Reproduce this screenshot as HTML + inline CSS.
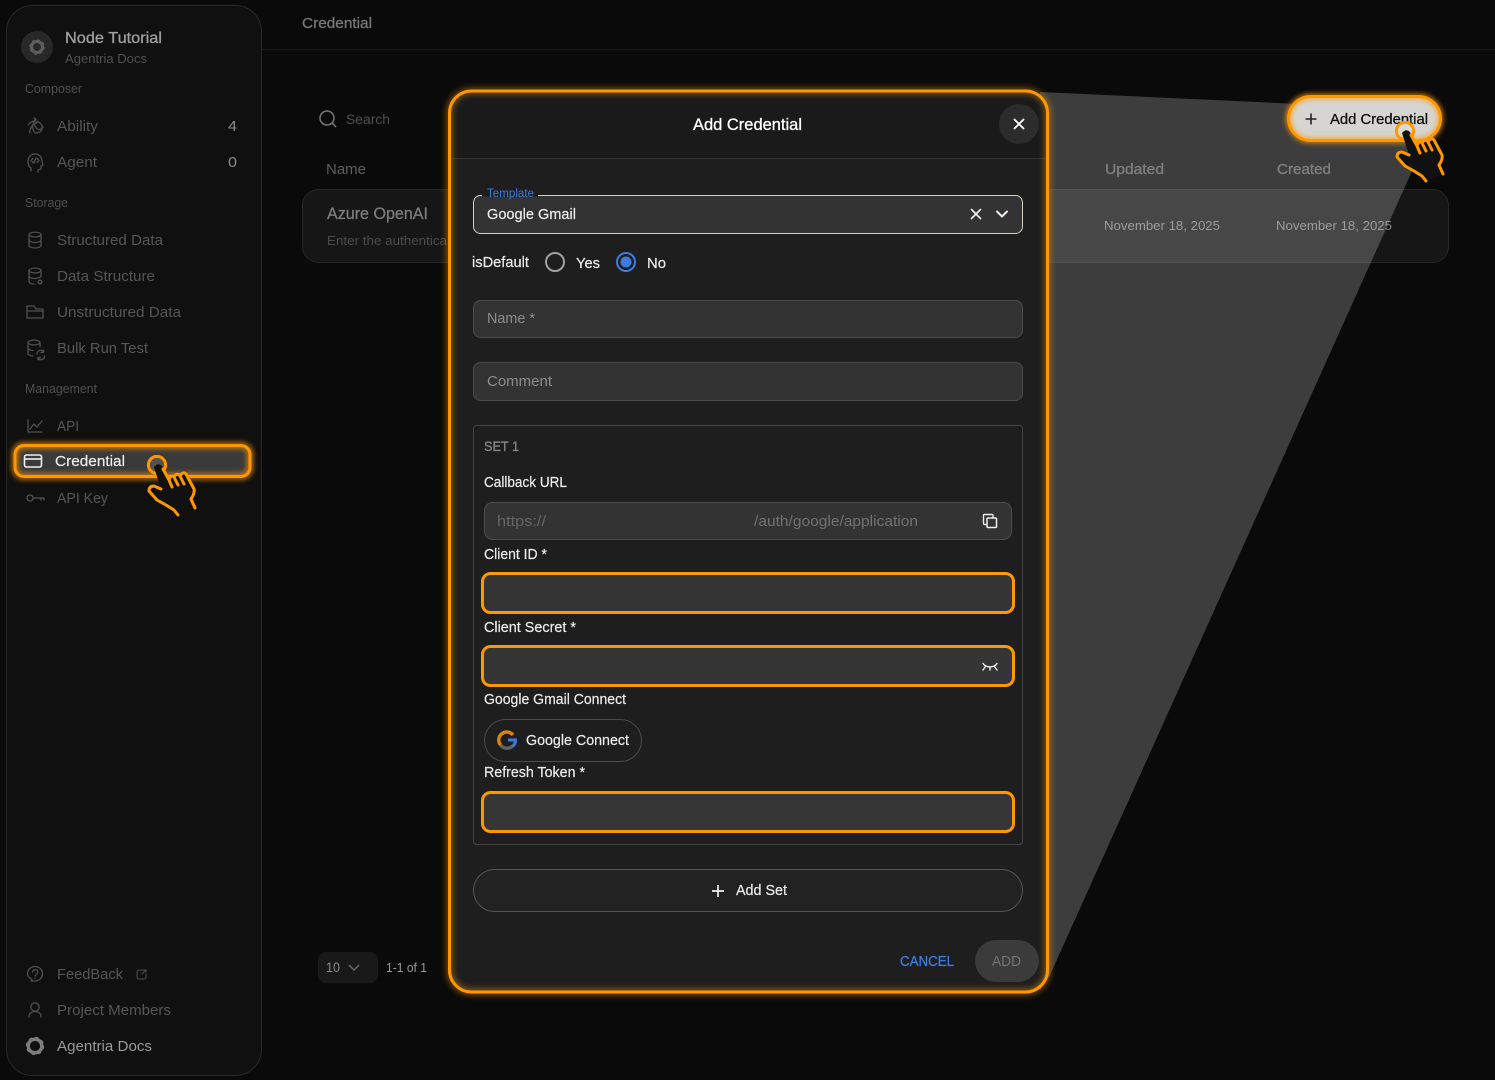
<!DOCTYPE html>
<html lang="en">
<head>
<meta charset="utf-8">
<title>Add Credential</title>
<style>
html,body{margin:0;padding:0;background:#0a0a0a;width:1495px;height:1080px;overflow:hidden}
svg{display:block}
text{font-family:"Liberation Sans",sans-serif;font-size:14.5px;fill:#eee}
.nav{fill:#565656;font-size:15px}
.sec{fill:#505050;font-size:12.5px}
.lab{fill:#ececec;color:#ececec;font-size:14.5px;stroke:currentColor;stroke-width:.2}
.m{stroke:currentColor;stroke-width:.3}
.ic{fill:none;stroke:#505050;stroke-width:1.3;stroke-linecap:round;stroke-linejoin:round}
</style>
</head>
<body>
<svg width="1495" height="1080" viewBox="0 0 1495 1080" xmlns="http://www.w3.org/2000/svg">
<defs>
<filter id="b3" x="-10%" y="-30%" width="120%" height="160%"><feGaussianBlur stdDeviation="3"/></filter>
<filter id="b2" x="-10%" y="-40%" width="120%" height="180%"><feGaussianBlur stdDeviation="2"/></filter>
<g id="hand">
<circle cx="0" cy="0" r="8.600" fill="#fff" fill-opacity=".12" stroke="#ff9800" stroke-width="3"/>
<path d="M-3 2 L4 24 L-3 21 Q-8 21 -8 26 L0 35 L9 40 L17 45 L21 50 L38 43 L34 34 Q38 28 37 24 L29 9 Q26 6 23 11 Q20 7 17 12 Q14 9 12 15 L5 1 Q1 -3 -3 2Z" fill="#111"/>
<path d="M4 24 L-3 21 Q-8 21 -8 26 L0 35 L9 40 L17 45 L21 50 M38 43 L34 34 Q38 28 37 24 L29 9 Q26 6 23 11 Q20 7 17 12 Q14 9 12 15 L6 4 M12 15 L15 22 M17 12 L21 20 M23 11 L27 19" fill="none" stroke="#ff9800" stroke-width="3" stroke-linecap="round" stroke-linejoin="round"/>
</g>
<g id="db"><ellipse cx="0" cy="-5.500" rx="6" ry="2.400"/><path d="M-6 -5.500V5.500C-6 7 -3 8 0 8C3 8 6 7 6 5.500V-5.500M-6 0C-6 1.500 -3 2.500 0 2.500C3 2.500 6 1.500 6 0"/></g>
</defs>

<rect width="1495" height="1080" fill="#0a0a0a"/>

<!-- top bar -->
<path d="M262 49.500H1495" stroke="#1b1b1b"/>
<text x="302" y="28" textLength="70" lengthAdjust="spacingAndGlyphs" class="m" style="fill:#787878;color:#787878;font-size:15px">Credential</text>

<!-- sidebar -->
<rect x="6.500" y="5.500" width="255" height="1070" rx="26" fill="#101010" stroke="#292929"/>
<circle cx="37" cy="47" r="16" fill="#282828"/>
<circle cx="37" cy="47" r="5.500" fill="none" stroke="#5e5e5e" stroke-width="3"/>
<circle cx="37" cy="47" r="7.300" fill="none" stroke="#5e5e5e" stroke-width="1" stroke-dasharray="3 2.730"/>
<text x="65" y="43" textLength="97" lengthAdjust="spacingAndGlyphs" class="m" style="fill:#a0a0a0;color:#a0a0a0;font-size:16px">Node Tutorial</text>
<text x="65" y="63" textLength="82" lengthAdjust="spacingAndGlyphs" style="fill:#505050;font-size:13px">Agentria Docs</text>
<text class="sec" x="25" y="93" textLength="57" lengthAdjust="spacingAndGlyphs">Composer</text>
<text class="nav" x="57" y="131" textLength="41" lengthAdjust="spacingAndGlyphs">Ability</text>
<text x="228" y="131" textLength="9" lengthAdjust="spacingAndGlyphs" style="fill:#8a8a8a;font-size:15px">4</text>
<text class="nav" x="57" y="167" textLength="40" lengthAdjust="spacingAndGlyphs">Agent</text>
<text x="228" y="167" textLength="9" lengthAdjust="spacingAndGlyphs" style="fill:#8a8a8a;font-size:15px">0</text>
<text class="sec" x="25" y="207" textLength="43" lengthAdjust="spacingAndGlyphs">Storage</text>
<text class="nav" x="57" y="245" textLength="106" lengthAdjust="spacingAndGlyphs">Structured Data</text>
<text class="nav" x="57" y="281" textLength="98" lengthAdjust="spacingAndGlyphs">Data Structure</text>
<text class="nav" x="57" y="317" textLength="124" lengthAdjust="spacingAndGlyphs">Unstructured Data</text>
<text class="nav" x="57" y="353" textLength="91" lengthAdjust="spacingAndGlyphs">Bulk Run Test</text>
<text class="sec" x="25" y="393" textLength="72" lengthAdjust="spacingAndGlyphs">Management</text>
<text class="nav" x="57" y="431" textLength="22" lengthAdjust="spacingAndGlyphs">API</text>
<text class="nav" x="57" y="503" textLength="51" lengthAdjust="spacingAndGlyphs">API Key</text>
<text class="nav" x="57" y="979" textLength="66" lengthAdjust="spacingAndGlyphs">FeedBack</text>
<text class="nav" x="57" y="1015" textLength="114" lengthAdjust="spacingAndGlyphs">Project Members</text>
<text x="57" y="1051" textLength="95" lengthAdjust="spacingAndGlyphs" style="fill:#9a9a9a;font-size:15px">Agentria Docs</text>

<!-- sidebar icons -->
<g class="ic">
<path d="M28 125C33 119 39 120 43 127C40 131 37 130 35 126C33 122 34 120 36 119M36 119L34 118M30 133C29 128 33 124 38 122M35 133C33 130 32 128 33 124M36 133L40 132C42 131 42 129 42 127"/>
<path d="M31 171V168C29 167 28 164 28 161C28 157 31 154 35 154C39 154 42 157 42 161C42 163 43 164 43 165L41 166V169L38 170V172"/>
<path d="M33 158.500L31 160.500L33 162.500M37 158.500L39 160.500L37 162.500M36 158L34 163"/>
<use href="#db" x="35" y="240"/>
<g transform="translate(35 276)"><path d="M-6 -5.500V5.500C-6 7 -3 8 -1 8M6 -5.500V0M-6 0C-6 1.500 -3 2.500 -1 2.500C2 2.500 6 1.500 6 0"/><ellipse cx="0" cy="-5.500" rx="6" ry="2.400"/></g>
<circle cx="40" cy="282" r="1.800"/>
<path d="M27 306H34L36 309H43V318H27ZM27 311H43"/>
<g transform="translate(34 348)"><path d="M-6 -5.500V5.500C-6 7 -3 8 -1 8M6 -5.500V-1M-6 0C-6 1.500 -3 2.500 -1 2.500"/><ellipse cx="0" cy="-5.500" rx="6" ry="2.400"/></g>
<path d="M37 354A3.500 3.500 0 0 1 43.500 352M44.500 356A3.500 3.500 0 0 1 38 358M43.500 350V352.500H41M38 360V357.500H40.500"/>
<path d="M28 420V432H42M30 429L34 424L37 427L42 421"/>
<circle cx="30" cy="498" r="3"/>
<path d="M33 498H44M41 498V500M44 498V500"/>
<path d="M31 981L32 979.500C29.500 978 27.500 976 27.500 973.500C27.500 969.500 31 966.500 35 966.500C39 966.500 42.500 969.500 42.500 973.500C42.500 978 39 981 35 981Z"/>
<path d="M32.500 972C33 969 38 969 38 972C38 974 35 974 35 976M35 978V978.300"/>
<path d="M145 970H140C138 970 137 971 137 973V977C137 978 138 979 139 979H144C145 979 146 978 146 977V974M142 974L146 970M143.500 970H146V972.500" stroke-width="1"/>
<circle cx="35" cy="1007" r="4.200"/>
<path d="M29 1017C29 1013 32 1011.500 35 1011.500C38 1011.500 41 1013 41 1017"/>
</g>
<circle cx="35" cy="1046" r="6.800" fill="none" stroke="#7d7d7d" stroke-width="3.400"/>
<circle cx="35" cy="1046" r="8.700" fill="none" stroke="#7d7d7d" stroke-width="1" stroke-dasharray="3.400 3.430"/>

<!-- credential selected -->
<rect x="15" y="445.500" width="235" height="31" rx="9" fill="#3a3a3a"/>
<rect x="15" y="445.500" width="235" height="31" rx="9" fill="none" stroke="#ff9800" stroke-opacity=".55" stroke-width="8" filter="url(#b2)"/>
<rect x="15" y="445.500" width="235" height="31" rx="9" fill="none" stroke="#ff9800" stroke-width="3"/>
<rect x="24.500" y="455" width="17" height="12" rx="2" fill="none" stroke="#f0f0f0" stroke-width="1.600"/>
<path d="M25 459H41" stroke="#f0f0f0" stroke-width="1.600"/>
<text x="55" y="466" textLength="70" lengthAdjust="spacingAndGlyphs" class="lab" style="fill:#eee;font-size:15px">Credential</text>
<use href="#hand" x="157" y="465"/>

<!-- main table -->
<circle cx="327" cy="118" r="7" fill="none" stroke="#777" stroke-width="1.500"/>
<path d="M332 123L336 127" stroke="#777" stroke-width="1.500"/>
<text x="346" y="124" textLength="44" lengthAdjust="spacingAndGlyphs" style="fill:#505050;font-size:14px">Search</text>
<text x="326" y="174" textLength="40" lengthAdjust="spacingAndGlyphs" style="fill:#5e5e5e;font-size:15px">Name</text>
<text x="1105" y="174" textLength="59" lengthAdjust="spacingAndGlyphs" class="m" style="fill:#5e5e5e;color:#5e5e5e;font-size:15px">Updated</text>
<text x="1277" y="174" textLength="54" lengthAdjust="spacingAndGlyphs" class="m" style="fill:#5e5e5e;color:#5e5e5e;font-size:15px">Created</text>
<rect x="302.500" y="189.500" width="1146" height="73" rx="16" fill="#161616" stroke="#262626"/>
<text x="327" y="219" textLength="101" lengthAdjust="spacingAndGlyphs" class="m" style="fill:#7c7c7c;color:#7c7c7c;font-size:16.500px">Azure OpenAI</text>
<text x="327" y="245" textLength="120" lengthAdjust="spacingAndGlyphs" style="fill:#4c4c4c;font-size:13px">Enter the authentica</text>
<text x="1104" y="230" textLength="116" lengthAdjust="spacingAndGlyphs" style="fill:#828282;font-size:13px">November 18, 2025</text>
<text x="1276" y="230" textLength="116" lengthAdjust="spacingAndGlyphs" style="fill:#828282;font-size:13px">November 18, 2025</text>
<rect x="318" y="952" width="60" height="31" rx="8" fill="#191919"/>
<text x="326" y="972" textLength="14" lengthAdjust="spacingAndGlyphs" style="fill:#8a8a8a;font-size:13.500px">10</text>
<path d="M349 965L354 970L359 965" fill="none" stroke="#666" stroke-width="1.500"/>
<text x="386" y="972" textLength="41" lengthAdjust="spacingAndGlyphs" style="fill:#9a9a9a;font-size:13px">1-1 of 1</text>

<!-- beam -->
<path d="M1040 92L1300 104L1420 110L1417 160L1050 975L1040 990Z" fill="#fff" fill-opacity=".21"/>

<!-- add credential button -->
<rect x="1288.500" y="96.500" width="152" height="44" rx="22" fill="#d6d5d2"/>
<rect x="1288.500" y="96.500" width="152" height="44" rx="22" fill="none" stroke="#ff9800" stroke-opacity=".6" stroke-width="7" filter="url(#b2)"/>
<rect x="1288.500" y="96.500" width="152" height="44" rx="22" fill="none" stroke="#ff9800" stroke-width="3"/>
<path d="M1311 113.500V124.500M1305.500 119H1316.500" stroke="#222" stroke-width="1.600"/>
<text class="m" x="1330" y="124" textLength="98" lengthAdjust="spacingAndGlyphs" style="fill:#111;color:#111;font-size:14.500px">Add Credential</text>
<use href="#hand" x="1405" y="131"/>

<!-- modal -->
<rect x="449.500" y="91" width="598" height="901" rx="22" fill="#1e1e1e"/>
<path d="M451 158V112C451 100 460 92 472 92H1026C1038 92 1047 100 1047 112V158Z" fill="#1a1a1a"/>
<path d="M451 158.500H1047" stroke="#333"/>
<rect x="449.500" y="91" width="598" height="901" rx="22" fill="none" stroke="#ff9800" stroke-opacity=".42" stroke-width="7" filter="url(#b3)"/>
<rect x="449.500" y="91" width="598" height="901" rx="22" fill="none" stroke="#ff9800" stroke-width="3"/>

<text class="m" x="693" y="130" textLength="109" lengthAdjust="spacingAndGlyphs" style="fill:#fff;color:#fff;font-size:16.500px">Add Credential</text>
<circle cx="1019" cy="124" r="20" fill="#2c2c2c"/>
<path d="M1014.500 119.500L1023.500 128.500M1023.500 119.500L1014.500 128.500" stroke="#fff" stroke-width="1.800" stroke-linecap="round"/>

<!-- template -->
<rect x="473.500" y="195.500" width="549" height="38" rx="7" fill="#333" stroke="#d6d1c0"/>
<path d="M482 195.500H538" stroke="#1e1e1e" stroke-width="2"/>
<text x="487" y="197" textLength="47" lengthAdjust="spacingAndGlyphs" style="fill:#3d7be0;font-size:11.500px">Template</text>
<text x="487" y="219" textLength="89" lengthAdjust="spacingAndGlyphs" class="lab" style="font-size:15px">Google Gmail</text>
<path d="M971.500 209.500L980.500 218.500M980.500 209.500L971.500 218.500" stroke="#eee" stroke-width="1.700" stroke-linecap="round"/>
<path d="M997 211.500L1002 216.500L1007 211.500" fill="none" stroke="#eee" stroke-width="2" stroke-linecap="round"/>

<!-- isDefault -->
<text class="lab" x="472" y="267" textLength="57" lengthAdjust="spacingAndGlyphs">isDefault</text>
<circle cx="555" cy="262" r="9" fill="none" stroke="#a0a0a0" stroke-width="2"/>
<text class="lab" x="576" y="268" textLength="24" lengthAdjust="spacingAndGlyphs">Yes</text>
<circle cx="626" cy="262" r="9" fill="none" stroke="#3d7be0" stroke-width="2"/>
<circle cx="626" cy="262" r="5.500" fill="#3d7be0"/>
<text class="lab" x="647" y="268" textLength="19" lengthAdjust="spacingAndGlyphs">No</text>

<rect x="473.500" y="300.500" width="549" height="37" rx="7" fill="#333" stroke="#4c4c4c"/>
<text x="487" y="323" textLength="48" lengthAdjust="spacingAndGlyphs" style="fill:#8c8c8c;font-size:15px">Name *</text>
<rect x="473.500" y="362.500" width="549" height="38" rx="7" fill="#333" stroke="#4c4c4c"/>
<text x="487" y="386" textLength="65" lengthAdjust="spacingAndGlyphs" style="fill:#8c8c8c;font-size:15px">Comment</text>

<!-- set 1 -->
<rect x="473.500" y="425.500" width="549" height="419" rx="3" fill="none" stroke="#444"/>
<text class="m" x="484" y="451" textLength="35" lengthAdjust="spacingAndGlyphs" style="fill:#878787;color:#878787;font-size:13.500px">SET 1</text>
<text class="lab" x="484" y="487" textLength="83" lengthAdjust="spacingAndGlyphs">Callback URL</text>
<rect x="484.500" y="502.500" width="527" height="37" rx="8" fill="#333" stroke="#4c4c4c"/>
<text x="497" y="526" textLength="49" lengthAdjust="spacingAndGlyphs" style="fill:#666;font-size:15px">https://</text>
<text x="754" y="526" textLength="164" lengthAdjust="spacingAndGlyphs" style="fill:#727272;font-size:15px">/auth/google/application</text>
<path d="M987 524.500H984.500C983.700 524.500 983.500 524 983.500 523V515.500C983.500 514.800 984 514.500 984.500 514.500H992C992.700 514.500 993 515 993 515.500V518" fill="none" stroke="#eee" stroke-width="1.400"/>
<rect x="987" y="518" width="9.500" height="9.500" rx="1" fill="none" stroke="#eee" stroke-width="1.500"/>

<text class="lab" x="484" y="559" textLength="63" lengthAdjust="spacingAndGlyphs">Client ID *</text>
<rect x="482.500" y="573.500" width="531" height="39" rx="8" fill="#353535" stroke="#ff9800" stroke-width="3"/>
<text class="lab" x="484" y="632" textLength="92" lengthAdjust="spacingAndGlyphs">Client Secret *</text>
<rect x="482.500" y="646.500" width="531" height="39" rx="8" fill="#353535" stroke="#ff9800" stroke-width="3"/>
<path d="M983 663.500C986 668 994 668 997 663.500M983 670L985.500 666.500M997 670L994.500 666.500M990 667V670" fill="none" stroke="#eee" stroke-width="1.400" stroke-linecap="round"/>
<text class="lab" x="484" y="704" textLength="142" lengthAdjust="spacingAndGlyphs">Google Gmail Connect</text>
<rect x="484.500" y="719.500" width="157" height="42" rx="21" fill="none" stroke="#4c4c4c"/>
<path d="M513 735A8 8 0 0 0 500.500 745" fill="none" stroke="#d9830f" stroke-width="3.400"/>
<path d="M500.500 745A8 8 0 0 0 512.500 746" fill="none" stroke="#626262" stroke-width="3.400"/>
<path d="M508 740H515.500C515.500 743 514.500 745 512.500 746.500" fill="none" stroke="#3d7be0" stroke-width="3"/>
<text class="lab" x="526" y="745" textLength="103" lengthAdjust="spacingAndGlyphs">Google Connect</text>
<text class="lab" x="484" y="777" textLength="101" lengthAdjust="spacingAndGlyphs">Refresh Token *</text>
<rect x="482.500" y="792.500" width="531" height="39" rx="8" fill="#363636" stroke="#ff9800" stroke-width="3"/>

<!-- add set -->
<rect x="473.500" y="869.500" width="549" height="42" rx="21" fill="#222" stroke="#555"/>
<path d="M718 885V897M712 891H724" stroke="#f0f0f0" stroke-width="1.700"/>
<text class="lab" x="736" y="895" textLength="51" lengthAdjust="spacingAndGlyphs">Add Set</text>

<!-- footer -->
<text class="m" x="900" y="966" textLength="54" lengthAdjust="spacingAndGlyphs" style="fill:#3d7be0;color:#3d7be0;font-size:14.500px">CANCEL</text>
<rect x="975" y="940" width="64" height="42" rx="21" fill="#3b3b3b"/>
<text x="992" y="966" textLength="29" lengthAdjust="spacingAndGlyphs" style="fill:#757575;font-size:14.500px">ADD</text>
</svg>
</body>
</html>
